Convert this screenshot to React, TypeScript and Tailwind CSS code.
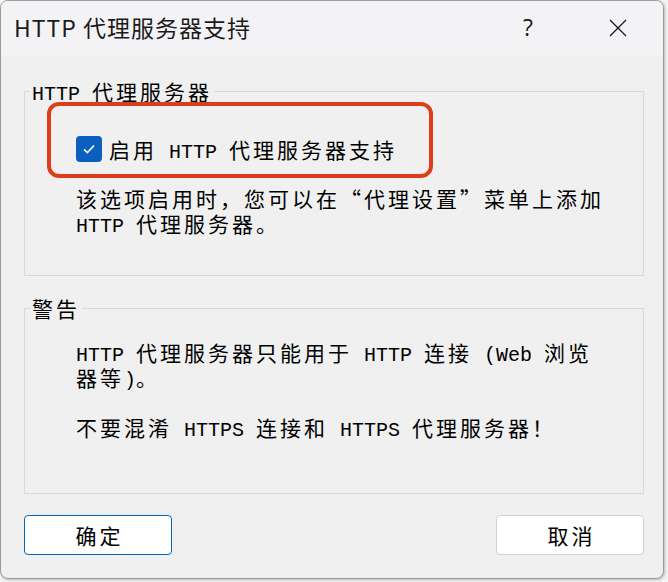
const latin = /^[\x00-\x7f]+$/;

// Mixed CJK / Latin text: CJK cells are 24px wide, Latin is half width (mono)
function Mixed({ text }: { text: string }) {
  return (
    <>
      {text
        .split(/([\x00-\x7f]+)/)
        .filter(Boolean)
        .map((s, i) =>
          latin.test(s) ? (
            <span key={i} className="[font-family:'Liberation_Mono',monospace] text-[20px] leading-[14px] tracking-normal">
              {s}
            </span>
          ) : (
            <span key={i}>{s}</span>
          )
        )}
    </>
  );
}

const body =
  "[font-family:'Noto_Sans_CJK_SC',sans-serif] [font-feature-settings:'fwid'] text-[21px] leading-[25px] tracking-[3px] text-black";

export default function App() {
  return (
    <div className="w-[668px] h-[582px] bg-[#f4f4f4] relative">
      <div className="w-[664px] h-[579px] rounded-[8px] border border-[#9b9b9b] overflow-hidden flex flex-col bg-[#f0f0f0] shadow-[1px_1px_3px_rgba(0,0,0,0.25)]">
        {/* Title bar */}
        <div className="h-[55px] shrink-0 bg-[#f3f3f6] flex items-center pl-[13px] [font-family:'Noto_Sans_CJK_SC',sans-serif]">
          <span className="text-[23px] tracking-[1px] text-[#1b1b1b] leading-none -mt-[2px]">HTTP 代理服务器支持</span>
          <span className="ml-auto mr-[76px] text-[23px] text-[#1b1b1b] leading-none [font-family:'Open_Sans',sans-serif] -mt-[2px]">?</span>
          <svg width="18" height="18" viewBox="0 0 18 18" className="mr-[36px] -mt-[2px]" fill="none" stroke="#1b1b1b" strokeWidth="1.3">
            <line x1="1" y1="1" x2="17" y2="17" />
            <line x1="17" y1="1" x2="1" y2="17" />
          </svg>
        </div>

        {/* Body */}
        <div className={`flex-1 flex flex-col pl-[23px] pr-[19px] pt-[23px] ${body}`}>
          <fieldset className="w-[620px] border border-[#d9d9d9] pl-[5px] pb-[39px]">
            <legend className="px-[2px]">
              <Mixed text="HTTP 代理服务器" />
            </legend>
            <div className="pl-[46px]">
              <div className="mt-[32px] h-[26px] flex items-center gap-[7px]">
                <div className="w-[26px] h-[26px] rounded-[4px] bg-[#0a5fbf] flex items-center justify-center">
                  <svg width="14" height="14" viewBox="0 0 14 14" fill="none" stroke="white" strokeWidth="1.5">
                    <path d="M2 7.4 L5.4 10.6 L12 3.6" />
                  </svg>
                </div>
                <span>
                  <Mixed text="启用 HTTP 代理服务器支持" />
                </span>
              </div>
              <p className="mt-[24px] w-[532px]">
                <Mixed text="该选项启用时，您可以在“代理设置”菜单上添加HTTP 代理服务器。" />
              </p>
            </div>
          </fieldset>

          <fieldset className="mt-[20px] w-[620px] border border-[#d9d9d9] pl-[5px] pb-[53px]">
            <legend className="px-[2px]">警告</legend>
            <div className="pl-[46px] w-[584px]">
              <p className="mt-[19px] w-[532px]">
                <Mixed text="HTTP 代理服务器只能用于 HTTP 连接 (Web 浏览器等)。" />
              </p>
              <p className="mt-[25px] w-[532px]">
                <Mixed text="不要混淆 HTTPS 连接和 HTTPS 代理服务器！" />
              </p>
            </div>
          </fieldset>

          <div className="mt-[21px] w-[620px] flex justify-between">
            <button className="w-[148px] h-[40px] rounded-[4px] bg-white border border-[#0067c0] pl-[3px]">确定</button>
            <button className="w-[148px] h-[40px] rounded-[4px] bg-white border border-[#d0d0d0] pl-[3px]">取消</button>
          </div>
        </div>
      </div>

      {/* highlight annotation */}
      <div className="absolute left-[47px] top-[102px] w-[386px] h-[76px] border-4 border-[#dc3e1c] rounded-[12px]" />
    </div>
  );
}
